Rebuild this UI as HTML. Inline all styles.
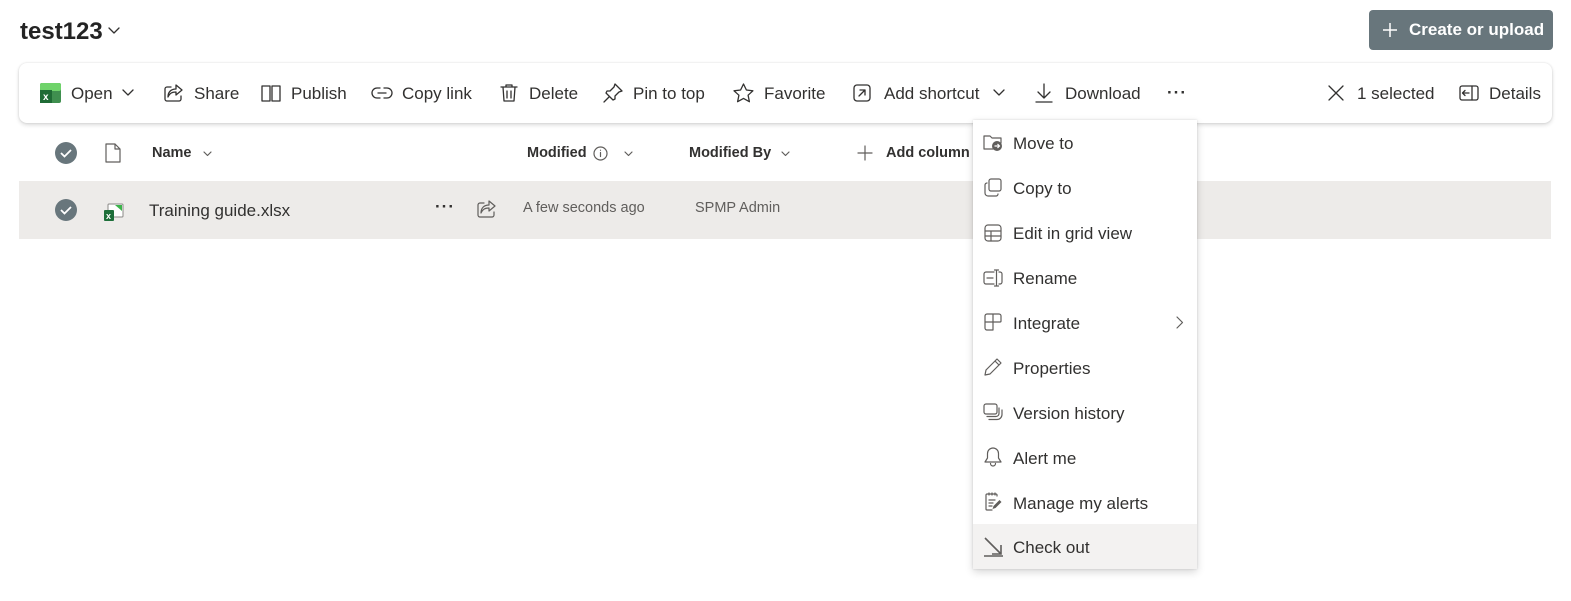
<!DOCTYPE html>
<html><head><meta charset="utf-8">
<style>
*{margin:0;padding:0;box-sizing:border-box}
body{width:1571px;height:601px;background:#fff;font-family:"Liberation Sans",sans-serif;color:#323130;position:relative;overflow:hidden}
.a{position:absolute;white-space:nowrap}
.t{font-size:17px;line-height:20px}
svg{position:absolute;overflow:visible}
.s{fill:none;stroke:#323130;stroke-width:1.3;stroke-linecap:round;stroke-linejoin:round}
.g{fill:none;stroke:#605e5c;stroke-width:1.2;stroke-linecap:round;stroke-linejoin:round}
</style></head><body>
<div class="a" style="left:20px;top:17px;font-size:24px;line-height:30px;font-weight:600;color:#242424">test123</div>
<svg style="left:108px;top:27px" width="12" height="8"><path class="s" d="M1 1l5 5 5-5"/></svg>

<div class="a" style="left:1369px;top:10px;width:184px;height:40px;background:#68767c;border-radius:4px"></div>
<svg style="left:1382px;top:22px" width="16" height="16"><path d="M8 1v14M1 8h14" stroke="#fff" stroke-width="1.5"/></svg>
<div class="a t" style="left:1409px;top:20px;color:#fff;font-weight:600">Create or upload</div>

<div class="a" style="left:19px;top:63px;width:1533px;height:60px;background:#fff;border-radius:8px;box-shadow:0 0 2px rgba(0,0,0,.12),0 2px 4px rgba(0,0,0,.14)"></div>

<!-- toolbar -->
<svg style="left:40px;top:83px" width="21" height="20"><rect x="0" y="0" width="21" height="20" rx="2" fill="#3f8f4f"/><rect x="0" y="0" width="21" height="8" rx="2" fill="#6fd36a"/><rect x="0" y="7" width="12" height="13" fill="#1f6b35"/><text x="3" y="17" font-size="10" fill="#fff" font-family="Liberation Sans" font-weight="bold">x</text></svg>
<div class="a t" style="left:71px;top:84px">Open</div>
<svg style="left:122px;top:89px" width="12" height="8"><path class="s" stroke-width="1.8" d="M1 1l5 5 5-5"/></svg>

<svg style="left:164px;top:84px" width="20" height="18"><path class="s" d="M7 3H3a2 2 0 0 0-2 2v10a2 2 0 0 0 2 2h12a2 2 0 0 0 2-2v-3M12 1l6 5-6 5V8c-4 0-6 1-8 5 0-5 3-8 8-8z"/></svg>
<div class="a t" style="left:194px;top:84px">Share</div>

<svg style="left:261px;top:84px" width="20" height="18"><path class="s" d="M1 2h8v15H1zM11 2h8v15h-8z"/></svg>
<div class="a t" style="left:291px;top:84px">Publish</div>

<svg style="left:372px;top:86px" width="20" height="14"><path class="s" d="M8 2H5a5 5 0 0 0 0 10h3M12 2h3a5 5 0 0 1 0 10h-3M6 7h8"/></svg>
<div class="a t" style="left:402px;top:84px">Copy link</div>

<svg style="left:500px;top:83px" width="18" height="20"><path class="s" d="M1 4h16M6 4V2h6v2M3 4l1 14h10l1-14M7 8v7M11 8v7"/></svg>
<div class="a t" style="left:529px;top:84px">Delete</div>

<svg style="left:603px;top:83px" width="20" height="20"><path class="s" d="M12 1l7 7-3 1-4 4 0 3-2 1-7-7 1-2 3 0 4-4zM6 14l-5 5"/></svg>
<div class="a t" style="left:633px;top:84px">Pin to top</div>

<svg style="left:733px;top:83px" width="21" height="20"><path class="s" d="M10.5 1l2.9 6 6.5.8-4.8 4.4 1.3 6.5-5.9-3.3-5.9 3.3 1.3-6.5L1 7.8 7.6 7z"/></svg>
<div class="a t" style="left:764px;top:84px">Favorite</div>

<svg style="left:853px;top:84px" width="18" height="18"><rect class="s" x="1" y="1" width="16" height="16" rx="3"/><path class="s" d="M6 12l6-6M7 6h5v5"/></svg>
<div class="a t" style="left:884px;top:84px">Add shortcut</div>
<svg style="left:993px;top:89px" width="12" height="8"><path class="s" stroke-width="1.8" d="M1 1l5 5 5-5"/></svg>

<svg style="left:1035px;top:83px" width="18" height="20"><path class="s" d="M9 1v13M3 9l6 6 6-6M1 19h16"/></svg>
<div class="a t" style="left:1065px;top:84px">Download</div>
<div class="a t" style="left:1167px;top:83px;font-weight:bold;letter-spacing:1px">···</div>

<svg style="left:1328px;top:85px" width="16" height="16"><path class="s" d="M1 1l14 14M15 1L1 15"/></svg>
<div class="a t" style="left:1357px;top:84px">1 selected</div>
<svg style="left:1459px;top:85px" width="20" height="16"><rect class="s" x="1" y="1" width="18" height="14" rx="2"/><path class="s" d="M13 1v14M10 8H4M6 5.5L3.5 8 6 10.5"/></svg>
<div class="a t" style="left:1489px;top:84px">Details</div>

<!-- header -->
<svg style="left:55px;top:142px" width="22" height="22"><circle cx="11" cy="11" r="11" fill="#68767c"/><path d="M6 11l3.5 3.5L16 8" fill="none" stroke="#fff" stroke-width="1.8"/></svg>
<svg style="left:105px;top:143px" width="16" height="20"><path class="g" d="M1 1h9l5 5v13H1zM10 1v5h5"/></svg>
<div class="a" style="left:152px;top:145px;font-size:14.5px;font-weight:600">Name</div>
<svg style="left:203px;top:151px" width="9" height="6"><path class="g" d="M1 1l3.5 3.5L8 1"/></svg>
<div class="a" style="left:527px;top:145px;font-size:14.5px;font-weight:600">Modified</div>
<svg style="left:593px;top:146px" width="15" height="15"><circle class="g" cx="7.5" cy="7.5" r="6.5"/><path class="g" d="M7.5 6.5v4M7.5 4.2v.1"/></svg>
<svg style="left:624px;top:151px" width="9" height="6"><path class="g" d="M1 1l3.5 3.5L8 1"/></svg>
<div class="a" style="left:689px;top:145px;font-size:14.5px;font-weight:600">Modified By</div>
<svg style="left:781px;top:151px" width="9" height="6"><path class="g" d="M1 1l3.5 3.5L8 1"/></svg>
<svg style="left:858px;top:146px" width="14" height="14"><path class="g" d="M7 0v14M0 7h14"/></svg>
<div class="a" style="left:886px;top:145px;font-size:14.5px;font-weight:600">Add column</div>

<!-- row -->
<div class="a" style="left:19px;top:181px;width:1532px;height:58px;background:#edebe9"></div>
<svg style="left:55px;top:199px" width="22" height="22"><circle cx="11" cy="11" r="11" fill="#68767c"/><path d="M6 11l3.5 3.5L16 8" fill="none" stroke="#fff" stroke-width="1.8"/></svg>
<svg style="left:103px;top:203px" width="22" height="19"><rect x="5" y="1" width="15" height="13" rx="1" fill="#fff" stroke="#8a8886"/><path d="M12 2h7v6z" fill="#3bb34a"/><rect x="1" y="7" width="10" height="11" rx="1" fill="#1e6f3a"/><text x="3" y="16" font-size="9" fill="#fff" font-family="Liberation Sans" font-weight="bold">x</text></svg>
<div class="a t" style="left:149px;top:201px;color:#323130">Training guide.xlsx</div>
<div class="a t" style="left:435px;top:197px;font-weight:bold;letter-spacing:1px">···</div>
<svg style="left:477px;top:200px" width="19" height="18"><path class="g" d="M7 3H3a2 2 0 0 0-2 2v10a2 2 0 0 0 2 2h12a2 2 0 0 0 2-2v-3M12 1l6 5-6 5V8c-4 0-6 1-8 5 0-5 3-8 8-8z"/></svg>
<div class="a" style="left:523px;top:200px;font-size:14.5px;color:#605e5c">A few seconds ago</div>
<div class="a" style="left:695px;top:200px;font-size:14.5px;color:#605e5c">SPMP Admin</div>

<!-- menu -->
<div class="a" style="left:973px;top:120px;width:224px;height:449px;background:#fff;box-shadow:0 0 2px rgba(0,0,0,.14),0 3px 8px rgba(0,0,0,.16)"></div>
<div class="a" style="left:973px;top:524px;width:224px;height:45px;background:#f3f2f1"></div>

<svg style="left:983px;top:133px" width="20" height="19"><path class="g" d="M1 3h6l2 2h9v5M1 3v13h9"/><circle cx="14" cy="13" r="5" fill="#605e5c"/><path d="M11.5 13h5M14.5 11l2 2-2 2" fill="none" stroke="#fff" stroke-width="1.2"/></svg>
<div class="a t" style="left:1013px;top:134px">Move to</div>
<svg style="left:984px;top:178px" width="18" height="19"><rect class="g" x="5" y="1" width="12" height="12" rx="2"/><path class="g" d="M3 5a2 2 0 0 0-2 2v8a3 3 0 0 0 3 3h8a2 2 0 0 0 2-2"/></svg>
<div class="a t" style="left:1013px;top:179px">Copy to</div>
<svg style="left:984px;top:224px" width="18" height="18"><rect class="g" x="1" y="1" width="16" height="16" rx="3"/><path class="g" d="M1 7h16M1 12h16M7 7v10"/></svg>
<div class="a t" style="left:1013px;top:224px">Edit in grid view</div>
<svg style="left:983px;top:269px" width="20" height="18"><path class="g" d="M11 3H3a2 2 0 0 0-2 2v8a2 2 0 0 0 2 2h8M16 3h1a2 2 0 0 1 2 2v8a2 2 0 0 1-2 2h-1M4 9h6M13.5 1v16M11.5 1h4M11.5 17h4"/></svg>
<div class="a t" style="left:1013px;top:269px">Rename</div>
<svg style="left:984px;top:313px" width="18" height="18"><path class="g" d="M1 3a2 2 0 0 1 2-2h12a2 2 0 0 1 2 2v5a1 1 0 0 1-1 1H9v8H3a2 2 0 0 1-2-2zM9 1v8M1 9h8"/></svg>
<div class="a t" style="left:1013px;top:314px">Integrate</div>
<svg style="left:1176px;top:316px" width="8" height="13"><path class="g" d="M1 1l5.5 5.5L1 12"/></svg>
<svg style="left:983px;top:357px" width="20" height="20"><path class="g" d="M14 2l4 4L7 17l-5 1 1-5zM12 4l4 4"/></svg>
<div class="a t" style="left:1013px;top:359px">Properties</div>
<svg style="left:983px;top:403px" width="21" height="19"><rect class="g" x="1" y="1" width="13" height="10" rx="2"/><path class="g" d="M4 13.5h9a3 3 0 0 0 3-3V5M6 16.5h8a5 5 0 0 0 5-5V7"/></svg>
<div class="a t" style="left:1013px;top:404px">Version history</div>
<svg style="left:984px;top:447px" width="18" height="20"><path class="g" d="M9 1a5.5 5.5 0 0 0-5.5 5.5V11L1 15h16l-2.5-4V6.5A5.5 5.5 0 0 0 9 1zM6.5 16.5a2.5 2.5 0 0 0 5 0"/></svg>
<div class="a t" style="left:1013px;top:449px">Alert me</div>
<svg style="left:984px;top:492px" width="19" height="20"><path class="g" d="M13 4V3a1 1 0 0 0-1-1H3a1 1 0 0 0-1 1v14a1 1 0 0 0 1 1h5M5 1v2M8 1v2M11 1v2M5 8h6M5 11h4M5 14h3"/><path d="M15.5 8l2 2-6 6-3 1 1-3z" fill="#605e5c"/></svg>
<div class="a t" style="left:1013px;top:494px">Manage my alerts</div>
<svg style="left:983px;top:536px" width="21" height="21"><path d="M2 2l16 16M18 9v9H9M1 20h19" fill="none" stroke="#605e5c" stroke-width="1.6"/></svg>
<div class="a t" style="left:1013px;top:538px">Check out</div>
</body></html>
